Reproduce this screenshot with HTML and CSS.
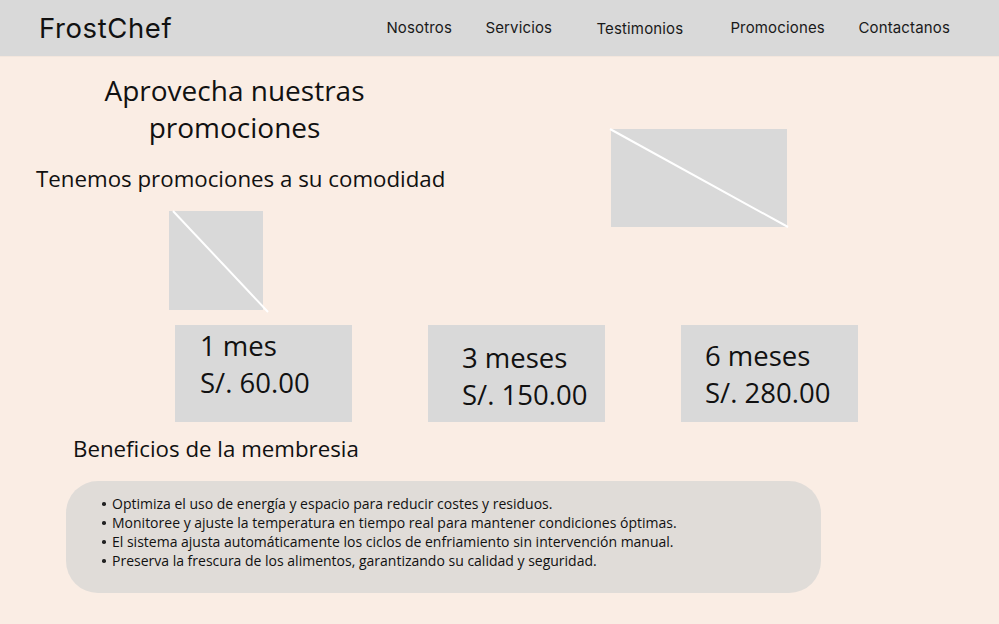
FILE: index.html
```html
<!DOCTYPE html>
<html lang="es">
<head>
<meta charset="utf-8">
<title>FrostChef - Promociones</title>
<link rel="stylesheet" href="styles.css">
</head>
<body>
<header class="topbar">
  <div class="brand">FrostChef</div>
  <nav class="nav">
    <a class="nav-link nav-nosotros" href="#">Nosotros</a>
    <a class="nav-link nav-servicios" href="#">Servicios</a>
    <a class="nav-link nav-testimonios" href="#">Testimonios</a>
    <a class="nav-link nav-promociones" href="#">Promociones</a>
    <a class="nav-link nav-contacto" href="#">Contactanos</a>
  </nav>
</header>
<main class="page">
  <section class="intro">
    <div class="intro-left">
      <h1 class="title">Aprovecha nuestras<br>promociones</h1>
      <p class="subtitle">Tenemos promociones a su comodidad</p>
      <div class="ph ph-small">
        <svg viewBox="0 0 94 99" preserveAspectRatio="none"><line x1="4" y1="0" x2="99" y2="101" stroke="#ffffff" stroke-width="2"/></svg>
      </div>
    </div>
    <div class="ph ph-large">
      <svg viewBox="0 0 176 98" preserveAspectRatio="none"><line x1="-1" y1="0" x2="177" y2="98" stroke="#ffffff" stroke-width="2"/></svg>
    </div>
  </section>
  <section class="plans">
    <div class="plan plan-1"><span>1 mes</span><span>S/. 60.00</span></div>
    <div class="plan plan-3"><span>3 meses</span><span>S/. 150.00</span></div>
    <div class="plan plan-6"><span>6 meses</span><span>S/. 280.00</span></div>
  </section>
  <section class="benefits">
    <h2 class="benefits-title">Beneficios de la membresia</h2>
    <div class="benefits-box">
      <ul class="benefits-list">
        <li>Optimiza el uso de energía y espacio para reducir costes y residuos.</li>
        <li>Monitoree y ajuste la temperatura en tiempo real para mantener condiciones óptimas.</li>
        <li>El sistema ajusta automáticamente los ciclos de enfriamiento sin intervención manual.</li>
        <li>Preserva la frescura de los alimentos, garantizando su calidad y seguridad.</li>
      </ul>
    </div>
  </section>
</main>
</body>
</html>
```
FILE: styles.css
```css
* { box-sizing: border-box; }
html, body { margin: 0; padding: 0; }
body {
  width: 999px;
  height: 624px;
  overflow: hidden;
  background: #faede4;
  font-family: "Open Sans", "Noto Sans", sans-serif;
  color: #111111;
}
.topbar {
  height: 57px;
  background: #d9d9d9;
  display: flex;
  align-items: center;
  padding-left: 39px;
  border-bottom: 1px solid #f3e6dd;
}
.brand {
  font-family: "Inter", "Noto Sans", sans-serif;
  font-size: 27.5px;
  font-weight: 400;
  letter-spacing: 0.6px;
  color: #111111;
}
.nav {
  display: flex;
  margin-left: auto;
  padding-right: 49px;
  font-family: "Inter", "Noto Sans", sans-serif;
  font-size: 15px;
  letter-spacing: 0.15px;
  position: relative;
  top: -1px;
}
.nav-link { color: #1a1a1a; text-decoration: none; }
.nav-nosotros { width: 99px; }
.nav-servicios { width: 111px; }
.nav-testimonios { width: 134px; position: relative; top: 1px; }
.nav-promociones { width: 128px; }

.page { padding-top: 15px; }
.intro { display: flex; }
.intro-left { width: 611px; padding-left: 36px; }
.title {
  width: 397px;
  margin: 0;
  text-align: center;
  font-size: 28px;
  font-weight: 400;
  line-height: 37px;
}
.subtitle {
  margin: 18px 0 0;
  font-size: 22.3px;
  line-height: 30px;
}
.ph { background: #d9d9d9; }
.ph svg { display: block; width: 100%; height: 100%; overflow: visible; }
.ph-small { width: 94px; height: 99px; margin: 17px 0 0 133px; }
.ph-large { width: 176px; height: 98px; margin: 57px 0 0 0; }

.plans {
  display: flex;
  gap: 76px;
  padding-left: 175px;
  margin-top: 15px;
}
.plan {
  width: 177px;
  height: 97px;
  background: #d9d9d9;
  display: flex;
  flex-direction: column;
  font-size: 27.5px;
  line-height: 37px;
}
.plan-1 { padding: 2px 0 0 25px; }
.plan-3 { padding: 14px 0 0 34px; }
.plan-6 { padding: 12px 0 0 24px; }

.benefits { padding-left: 66px; }
.benefits-title {
  margin: 12px 0 0 7px;
  font-size: 22.3px;
  font-weight: 400;
  line-height: 30px;
}
.benefits-box {
  width: 755px;
  height: 112px;
  margin-top: 17px;
  background: #e0dcd8;
  border-radius: 32px;
  padding: 13px 0 0 36px;
}
.benefits-list {
  margin: 0;
  padding: 0;
  list-style: none;
  font-size: 14px;
  line-height: 19px;
}
.benefits-list li { position: relative; padding-left: 10px; }
.benefits-list li::before {
  content: "";
  position: absolute;
  left: 0;
  top: 8px;
  width: 3.5px;
  height: 3.5px;
  border-radius: 50%;
  background: #222222;
}
```
